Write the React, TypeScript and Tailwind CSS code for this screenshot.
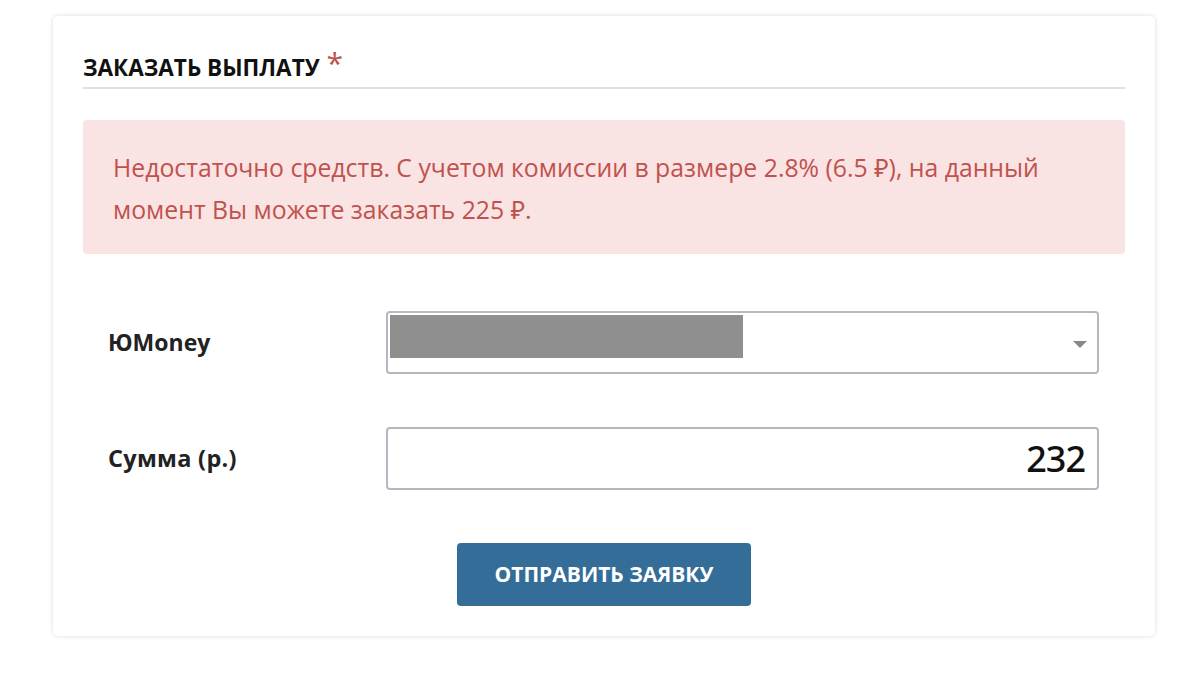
import React from "react";

export default function App() {
  const font = { fontFamily: '"Open Sans", "Noto Sans", sans-serif' };
  return (
    <div className="min-h-[673px] w-[1200px] bg-white pt-[16px] pl-[53px]" style={font}>
      <div className="w-[1102px] h-[620px] rounded-[5px] bg-white shadow-[0_0_5px_rgba(0,0,0,0.14)] px-[30px] pt-[32px]">
        <div className="flex items-start border-b-2 border-[#dfe0e6] h-[41px] pt-[5px]">
          <span className="text-[22.5px] leading-[30px] font-bold text-[#111]">ЗАКАЗАТЬ ВЫПЛАТУ</span>
          <span className="ml-[7px] -mt-[5px] text-[30px] leading-[30px] text-[#b9504c] font-normal">*</span>
        </div>
        <div className="mt-[31px] h-[134px] rounded-[4px] bg-[#fae3e3] px-[30px] pt-[26px] text-[24.8px] leading-[42px] text-[#c0524e]">
          Недостаточно средств. С учетом комиссии в размере 2.8% (6.5 ₽), на данный
          <br />
          момент Вы можете заказать 225 ₽.
        </div>
        <div className="mt-[57px] flex items-center">
          <div className="w-[303px] pl-[25px] text-[23px] font-bold text-[#222]">ЮMoney</div>
          <div className="relative w-[713px] h-[63px] rounded-[4px] border-2 border-[#b4b8c0] bg-white">
            <div className="absolute left-[2px] top-[2px] w-[353px] h-[43px] bg-[#8f8f8f]" />
            <svg className="absolute right-[10px] top-[28px]" width="14" height="8" viewBox="0 0 14 8">
              <path d="M0 0 L14 0 L7 7 Z" fill="#888" />
            </svg>
          </div>
        </div>
        <div className="mt-[53px] flex items-center">
          <div className="w-[303px] pl-[25px] text-[23.5px] font-bold text-[#222] tracking-[0.3px]">Сумма (р.)</div>
          <div className="w-[713px] h-[63px] rounded-[4px] border-2 border-[#b4b8c0] bg-white flex items-center justify-end pr-[12px]">
            <span className="text-[36px] leading-none text-[#111] tracking-[-1px]" style={{ fontFamily: '"Noto Sans", sans-serif', fontWeight: 500 }}>232</span>
          </div>
        </div>
        <div className="mt-[53px] flex justify-center">
          <button className="w-[294px] h-[63px] rounded-[4px] bg-[#346d97] text-white text-[21px] font-bold">
            ОТПРАВИТЬ ЗАЯВКУ
          </button>
        </div>
      </div>
    </div>
  );
}
